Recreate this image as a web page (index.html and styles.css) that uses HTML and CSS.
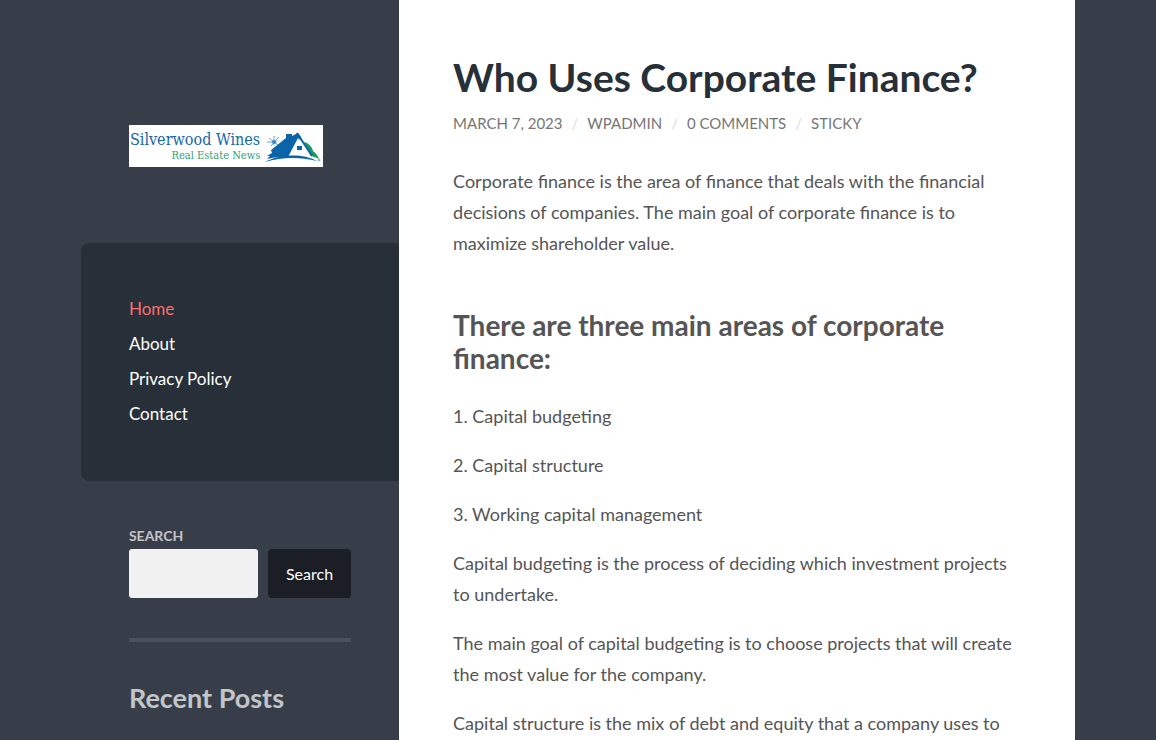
FILE: index.html
```html
<!DOCTYPE html>
<html lang="en">
<head>
    <meta charset="UTF-8">
    <meta name="viewport" content="width=device-width, initial-scale=1.0">
    <title>Who Uses Corporate Finance? - Silverwood Wines</title>
    <link rel="stylesheet" href="styles.css">
</head>
<body>
    <div class="wrapper">
        <aside class="sidebar">
            <header class="blog-header">
                <a href="#" class="blog-logo">
                    <span class="logo-text">
                        <span class="logo-name">Silverwood Wines</span>
                        <span class="logo-tagline">Real Estate News</span>
                    </span>
                    <svg class="logo-house" viewBox="0 0 60 42" aria-hidden="true">
                        <!-- sun -->
                        <path stroke="#6aa5d0" d="M11 11v9M6 13l9 7M16 12l-8 9M4 17h10"/>
                        <circle cx="11" cy="17" r="2" fill="#3b86bd"/>
                        <!-- roof and chimney -->
                        <path fill="#0b64a8" d="M4 31 9 28 8 25 23 13V9h6v2l6-3 3 4-12 20c-8 0-14 0-22 2l3-3z"/>
                        <!-- hill -->
                        <path fill="#1a9a5c" d="M41 17c5 1 8 5 9 9 3 2 5 5 6 8-4-2-5-2-8-3z"/>
                        <!-- gable -->
                        <path fill="#fff" d="M35 13 47 32H25z"/>
                        <path stroke="#0b64a8" stroke-width="2" d="M34 8l15 23"/>
                        <path fill="#0b64a8" d="M34 21h5v4h-5z"/>
                        <!-- ground -->
                        <path fill="#0b64a8" d="M2 37c14-8 38-9 52-1-17-4-35-4-52 1z"/>
                        <circle cx="56" cy="35" r="1" stroke="#6aa5d0"/>
                    </svg>
                </a>
            </header>

            <nav class="blog-menu">
                <ul>
                    <li class="current"><a href="#">Home</a></li>
                    <li><a href="#">About</a></li>
                    <li><a href="#">Privacy Policy</a></li>
                    <li><a href="#">Contact</a></li>
                </ul>
            </nav>

            <div class="widgets">
                <form class="widget search-form" onsubmit="return false">
                    <label for="search">Search</label>
                    <div class="search-row">
                        <input type="search" id="search">
                        <button type="submit">Search</button>
                    </div>
                </form>
                <div class="widget">
                    <h2>Recent Posts</h2>
                </div>
            </div>
        </aside>

        <main class="content">
            <article>
                <h1>Who Uses Corporate Finance?</h1>
                <div class="post-meta">
                    <a href="#">March 7, 2023</a>
                    <span class="sep">/</span>
                    <a href="#">wpadmin</a>
                    <span class="sep">/</span>
                    <a href="#">0 Comments</a>
                    <span class="sep">/</span>
                    <span>Sticky</span>
                </div>
                <div class="post-content">
                    <p>Corporate finance is the area of finance that deals with the financial decisions of companies. The main goal of corporate finance is to maximize shareholder value.</p>
                    <h2>There are three main areas of corporate finance:</h2>
                    <p>1. Capital budgeting</p>
                    <p>2. Capital structure</p>
                    <p>3. Working capital management</p>
                    <p>Capital budgeting is the process of deciding which investment projects to undertake.</p>
                    <p>The main goal of capital budgeting is to choose projects that will create the most value for the company.</p>
                    <p>Capital structure is the mix of debt and equity that a company uses to</p>
                </div>
            </article>
        </main>
    </div>
</body>
</html>
```
FILE: styles.css
```css
* {
    box-sizing: border-box;
}
html, body {
    height: 100%;
}
body {
    margin: 0;
    font-family: Lato, sans-serif;
    font-size: 18px;
    line-height: 31px;
    color: #555;
    background: #373e49;
}
a {
    color: inherit;
    text-decoration: none;
}
.wrapper {
    display: flex;
    width: 86%;
    min-height: 100%;
    margin: 0 auto;
}
.sidebar {
    width: 32%;
}
.blog-header {
    padding: 125px 48px 76px;
}
.blog-logo {
    display: flex;
    justify-content: space-between;
    width: 194px;
    height: 42px;
    background: #fff;
}
.logo-text {
    display: flex;
    flex-direction: column;
    align-items: flex-end;
    padding: 6px 0 0 1px;
    font-family: "DejaVu Serif Condensed", "DejaVu Serif", serif;
    white-space: nowrap;
}
.logo-name {
    font-size: 16px;
    line-height: 18px;
    color: #1767a8;
}
.logo-tagline {
    font-size: 11px;
    line-height: 14px;
    color: #2aa37a;
}
.logo-house {
    width: 60px;
    height: 42px;
    fill: none;
}
.blog-menu {
    padding: 48px 48px 50px;
    background: #272f38;
    border-radius: 8px 0 0 8px;
}
.blog-menu ul {
    margin: 0;
    padding: 0;
    list-style: none;
}
.blog-menu li {
    font-size: 17px;
    line-height: 35px;
    color: #fff;
}
.blog-menu .current {
    color: #ff706c;
}
.widgets {
    padding: 48px 48px 0;
}
.widget {
    color: #c3c5c8;
}
.widget + .widget {
    margin-top: 40px;
    padding-top: 40px;
    border-top: 4px solid #4b515b;
}
.widget h2 {
    margin: 0;
    font-size: 27px;
    line-height: 32px;
}
.search-form label {
    display: block;
    font-size: 14px;
    font-weight: 700;
    line-height: 14px;
    text-transform: uppercase;
    margin-bottom: 6px;
}
.search-row {
    display: flex;
    gap: 10px;
}
.search-row input {
    flex: 1;
    min-width: 0;
    height: 49px;
    padding: 8px;
    border: 0;
    border-radius: 3px;
    background: #f1f1f1;
    font: inherit;
}
.search-row button {
    width: 83px;
    border: 0;
    border-radius: 4px;
    background: #1b1f25;
    color: #fff;
    font-family: inherit;
    font-size: 16px;
}
.content {
    width: 68%;
    padding: 54px 54px 0;
    background: #fff;
}
.content h1 {
    margin: 0;
    font-size: 39px;
    line-height: 46px;
    color: #272f38;
}
.post-meta {
    display: flex;
    gap: 9px;
    margin-top: 13px;
    font-size: 15px;
    line-height: 20px;
    text-transform: uppercase;
    color: #767676;
}
.post-meta .sep {
    color: #ddd;
}
.post-content {
    margin-top: 33px;
}
.post-content p {
    margin: 0 0 18px;
}
.post-content p:last-child {
    margin-bottom: 0;
}
.post-content h2 {
    margin: 50px 0 26px;
    font-size: 28px;
    line-height: 33px;
}
```
